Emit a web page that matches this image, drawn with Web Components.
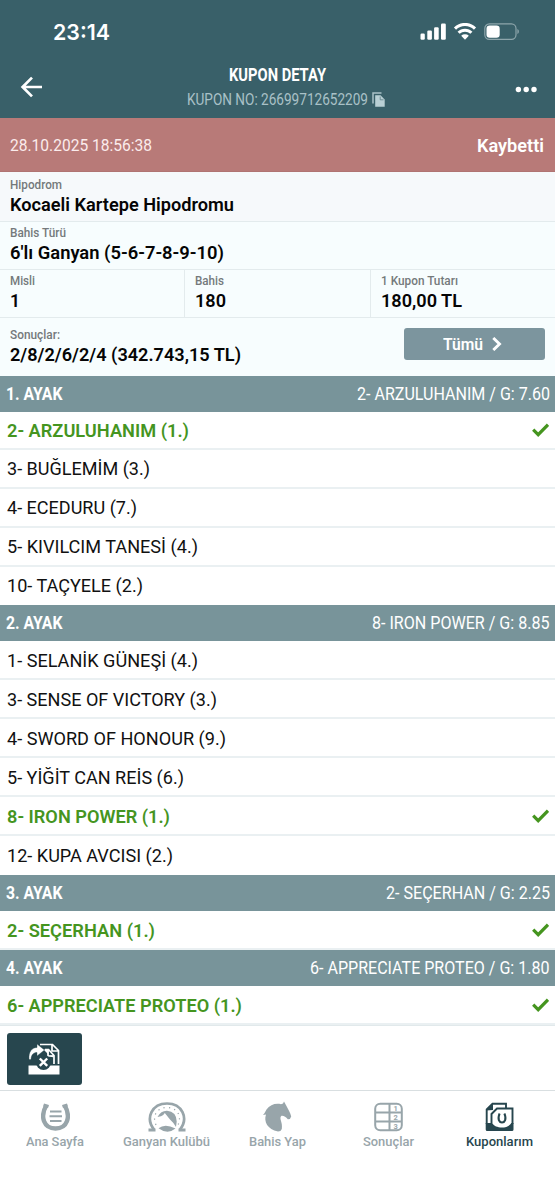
<!DOCTYPE html>
<html lang="tr"><head><meta charset="utf-8"><title>Kupon Detay</title>
<style>html,body{margin:0;background:#fff}</style></head><body>
<coupon-app></coupon-app>
<script>
const define=(name,css,html,after)=>{
  const t=document.createElement('template');
  t.innerHTML=`<style>*{box-sizing:border-box}${css}</style>${html}`;
  customElements.define(name,class extends HTMLElement{
    connectedCallback(){
      if(this.shadowRoot)return;
      this.attachShadow({mode:'open'}).append(t.content.cloneNode(true));
      if(after)after.call(this,this.shadowRoot);
    }
  });
};
// Single-line label whose glyphs are scaled horizontally to the width in "w".
define('fit-text',':host{display:block;white-space:nowrap;flex:none}span{display:inline-block;transform-origin:0 50%}','<span><slot></slot></span>',function(r){
  const w=+this.getAttribute('w'),s=r.querySelector('span');
  const n=s.getBoundingClientRect().width;
  this.style.width=w+'px';
  if(n)s.style.transform=`scaleX(${w/n})`;
});
define('status-bar',`:host{display:flex;height:62px;padding:1px 35px 0 53px;align-items:center;justify-content:space-between;color:#fff}
fit-text{font:600 22px Inter,sans-serif}svg{display:block}`,
`<fit-text w="57"><slot></slot></fit-text>
<svg width="100" height="18" viewBox="0 0 100 18" fill="#fff"><rect x="0.5" y="10.5" width="4.3" height="6.2" rx="1.2"/><rect x="7.3" y="7.5" width="4.6" height="9.2" rx="1.2"/><rect x="14.1" y="4.2" width="4.6" height="12.5" rx="1.2"/><rect x="21" y=".5" width="4.8" height="16.2" rx="1.2"/>
<g fill="none" stroke="#fff" stroke-width="3"><path d="M35 5.6a14 14 0 0 1 20 0"/><path d="M38.6 9.8a9 9 0 0 1 12.8 0"/></g><path d="M41.2 12.7a5.6 5.6 0 0 1 7.6 0L45 16.8z"/>
<rect x="64.8" y=".9" width="31.2" height="15.4" rx="4.6" fill="none" stroke="#8da5ab" stroke-width="1.2"/><rect x="66.5" y="2.5" width="13.2" height="12.2" rx="3.2"/><path d="M97.4 6v5c2-.8 2-4.200 0-5z" fill="#8da5ab"/></svg>`);
define('app-header',`:host{display:block;height:118px;background:#396069;color:#fff;font-family:Roboto,sans-serif}
.bar{display:grid;grid-template-columns:60px 1fr 60px;height:56px}
.back{display:block;margin:14px 0 0 20px}.more{display:block;margin:24px 0 0 20px}
.mid{display:flex;flex-direction:column;align-items:center}
.title{font-size:17.5px;line-height:20px;font-weight:700;margin-top:3px}
.no{display:flex;gap:4px;margin-top:5px;padding-left:16px;font-size:16.5px;line-height:20px;color:#a9c1c7}
.no svg{margin-top:2px}`,
`<status-bar>23:14</status-bar><div class="bar"><svg class="back" width="24" height="22" fill="none" stroke="#fff" stroke-width="2.7"><path d="M22 11H3M12 1.600L2.600 11l9.400 9.400"/></svg>
<div class="mid"><fit-text class="title" w="97">KUPON DETAY</fit-text><div class="no"><fit-text w="181">KUPON NO: 26699712652209</fit-text><svg width="13" height="15"><path d="M1 11.500V1h8.500" fill="none" stroke="#a9c1c7" stroke-width="1.500"/><path d="M3.200 3.200h5.300l4.200 4.200V14.700h-9.500z" fill="#b9d0d5"/><path d="M8.200 4.500v3.300h3.300" fill="none" stroke="#5d7f87" stroke-width=".8"/></svg></div></div>
<svg class="more" width="24" height="8" fill="#fff"><circle cx="3.400" cy="3.500" r="2.700"/><circle cx="11.200" cy="3.500" r="2.700"/><circle cx="19" cy="3.500" r="2.700"/></svg></div>`);
define('status-banner',`:host{display:flex;height:54px;background:#b87a78;color:#fff;align-items:center;justify-content:space-between;padding:1px 11px 0 10.4px;font-family:Roboto,sans-serif;border-bottom:1px solid #b07472}
.d{font-size:16px;color:#fbecec}.s{font-size:18px;font-weight:600}`,
`<fit-text class="d" w="142">28.10.2025 18:56:38</fit-text><fit-text class="s" w="67">Kaybetti</fit-text>`);
define('info-field',`:host{display:block;height:48px;padding:4px 0 0 10px;background:#f7fdfe;border-bottom:1px solid #e3ebed;font-family:Roboto,sans-serif}
.l{font-size:12px;line-height:15px;font-weight:500;color:#74797b}.v{font-size:18px;line-height:22px;font-weight:600;color:#050505;margin-top:1px}`,
`<fit-text class="l"></fit-text><fit-text class="v"></fit-text>`,function(r){
  const put=(c,t,w)=>{const o=r.querySelector(c),e=document.createElement('fit-text');e.className=o.className;e.textContent=t;e.setAttribute('w',w);o.replaceWith(e)};
  put('.l',this.getAttribute('label'),this.getAttribute('lw'));
  put('.v',this.getAttribute('value'),this.getAttribute('vw'));
});
define('coupon-info',`:host{display:block}
.first{height:50px;background:#f6f9fb;padding-top:5.5px}.three{display:grid;grid-template-columns:184px 186px 185px}
.three info-field+info-field{border-left:1px solid #e3ebed}
.res{display:flex;height:58px;background:#f7fdfe;justify-content:space-between}.res info-field{border:0;height:57px;padding-top:9.5px;background:none}
button{width:141px;height:32px;margin:10px 10px 0 0;border:0;border-radius:3px;background:#7c959e;color:#fff;display:flex;align-items:center;justify-content:center;gap:9px;padding:0 4px 0 0;font:600 16px Roboto,sans-serif}`,
`<info-field class="first" label="Hipodrom" lw="52" value="Kocaeli Kartepe Hipodromu" vw="224"></info-field>
<info-field label="Bahis Türü" lw="56" value="6'lı Ganyan (5-6-7-8-9-10)" vw="214"></info-field>
<div class="three"><info-field label="Misli" lw="25" value="1" vw="10"></info-field><info-field label="Bahis" lw="29" value="180" vw="31"></info-field><info-field label="1 Kupon Tutarı" lw="77" value="180,00 TL" vw="81"></info-field></div>
<div class="res"><info-field label="Sonuçlar:" lw="50" value="2/8/2/6/2/4 (342.743,15 TL)" vw="231"></info-field><button><fit-text w="40">Tümü</fit-text><svg width="10" height="14" fill="none" stroke="#fff" stroke-width="2.900"><path d="M1.300 1L7.500 7l-6.200 6"/></svg></button></div>`);
define('leg-header',`:host{display:flex;height:36px;background:#78949a;color:#fff;align-items:center;justify-content:space-between;padding:0 5.5px 1px 5.5px;font-family:Roboto,sans-serif}
.a{font-size:18px;font-weight:700}.b{font-size:18.5px}`,`<div class="a"></div><div class="b"></div>`,function(r){
  for(const [c,t,w] of [['.a',this.getAttribute('leg'),56.500],['.b',this.getAttribute('winner'),this.getAttribute('w')]]){const e=document.createElement('fit-text');e.textContent=t;e.setAttribute('w',w);r.querySelector(c).append(e)}
});
define('horse-row',`:host{display:flex;height:39px;background:#fff;border-bottom:2px solid #eaf0f2;align-items:center;justify-content:space-between;padding:1px 6px 0 6.5px;font:18px Roboto,sans-serif;color:#111}
:host([short]){height:38px;padding-top:0}:host([won]){color:#45951f;font-weight:600}svg{display:none}:host([won]) svg{display:block;margin-right:.5px}:host([last]){border-color:transparent}`,
`<div></div><svg width="17" height="14" fill="none" stroke="#45951f" stroke-width="3.2"><path d="M1.200 6.700l5 5L16 1.700"/></svg>`,function(r){
  const e=document.createElement('fit-text');e.setAttribute('w',this.getAttribute('w'));e.textContent=this.getAttribute('name');r.querySelector('div').append(e);
});
define('race-leg',':host{display:block}:host(:first-of-type) ::slotted(horse-row){padding-top:0}','<slot></slot>');
define('action-bar',`:host{display:block;height:66px;padding:7px 0 0 6.5px;border-bottom:1px solid #d9dfe1;border-top:1px solid #e1e9eb;background:#fff}
button{display:flex;align-items:center;justify-content:center;width:75px;height:52px;border:0;border-radius:3px;background:#27464e;padding:0}`,
`<button aria-label="Paylaş"><svg width="32" height="32" viewBox="0 0 32 32"><g fill="none" stroke="#fff" stroke-width="1.700"><path d="M12 1.500h12.500l6 6V21M24 2v6h6"/><path d="M17 6.500h3.500l5.500 6V21M20 7v6h5.500"/></g><path d="M15.500 6.500l5 0v6h4l1 2-3-1z" fill="#fff"/><path d="M1 16.500C.5 8.500 4 4.500 9 4.500V1l7.500 6L9 13V9.500C5.500 9.500 3.300 11.500 3 16.500z" fill="#fff" stroke="#27464e" stroke-width=".4"/><path d="M.5 22.500h31V31.500H.5z" fill="#fff"/><circle cx="15.500" cy="19.300" r="7.600" fill="#27464e"/><path d="M11.800 15.500l7.400 7.400m0-7.400l-7.400 7.400" stroke="#fff" stroke-width="2.400"/></svg></button>`);
define('tab-item',`:host{display:flex;flex-direction:column;align-items:center;color:#98a5aa;font:500 13px/18px Roboto,sans-serif}
:host([active]){color:#27464e}.i{height:30px;display:flex;align-items:flex-end;margin-bottom:1px}.t{margin-left:-1px}`,`<div class="i"><slot name="icon"></slot></div><div class="t"></div>`,function(r){
  const e=document.createElement('fit-text');e.setAttribute('w',this.getAttribute('w'));e.textContent=this.getAttribute('label');r.querySelector('.t').append(e);
});
define('tab-bar',`:host{display:grid;grid-template-columns:repeat(5,1fr);height:109px;padding-top:11px;background:#fff}svg{display:block}text{font:700 7.500px Roboto,sans-serif}`,
`<tab-item label="Ana Sayfa" w="58"><svg slot="icon" width="29" height="30" viewBox="0 0 29 30"><path d="M5.500 3C-1.500 15 3 26.500 14.500 26.500S30.500 15 23.500 3" fill="none" stroke="currentColor" stroke-width="4.400"/><path d="M3 1.500l5 1.500-1 3-5-1.500zM26 1.500l-5 1.500 1 3 5-1.500z" fill="currentColor"/><path d="M9 9.500h11.500M8.500 14.200h12.500M9 19h11.500" stroke="currentColor" stroke-width="1.900"/></svg></tab-item>
<tab-item label="Ganyan Kulübü" w="87"><svg slot="icon" width="38" height="31" viewBox="0 0 38 31" fill="currentColor"><path d="M6 28.500C-3 17 4 2.500 19 2.500S41 17 32 28.500" fill="none" stroke="currentColor" stroke-width="2.700"/><path d="M.5 27.500h7v3H.5zM30.500 27.500h7v3h-7z"/><path d="M8 24C3.500 14 10 6.500 19 6.500S34.500 14 30 24" fill="none" stroke="currentColor" stroke-width="1.200" stroke-dasharray="1.200 4.200"/><path d="M9.500 16Q13 9.500 19 9.700Q28.500 10.500 28.700 20.500L28 26Q25.500 21.500 22 18.500L16.800 12Q15.500 14.500 13 15.200zM10.500 27.200Q17 22 27.500 27.500Q19.500 34 10.500 27.200z"/></svg></tab-item>
<tab-item label="Bahis Yap" w="57"><svg slot="icon" width="29" height="31" viewBox="0 0 29 31" fill="currentColor"><path d="M21 .5l2.200 4C25 8 27.500 12 28.200 15.500Q27.500 18.500 24.800 18.300Q22 14.500 18.500 14.800C15.500 17.500 20 21 18.800 28Q18 30.500 15 30.500C4.500 28.500 .5 20.500 3 13.500L0 14C2 12 2.500 10 3.500 8.500C7 4 12 2 18 3.200Q20.500 3 21 .5z"/></svg></tab-item>
<tab-item label="Sonuçlar" w="51"><svg slot="icon" width="29" height="30" viewBox="0 0 29 30" fill="currentColor"><rect x="1.200" y="1.700" width="26.600" height="26.600" rx="5" fill="none" stroke="currentColor" stroke-width="2"/><path d="M1 10.500h27M1 19.500h27M15.500 2v26" fill="none" stroke="currentColor" stroke-width="2"/><text x="19.500" y="8.700">1</text><text x="19.500" y="17.700">2</text><text x="19.500" y="26.500">3</text></svg></tab-item>
<tab-item active label="Kuponlarım" w="67"><svg slot="icon" width="29" height="30" viewBox="0 0 29 30" fill="none" stroke="currentColor" stroke-width="1.900"><path d="M1.700 22V7.500L7.500 1.800H21V6M6.500 21V12l5.500-5.500H27.500V22"/><path d="M1 8.500L8 1.500V8z" fill="currentColor" stroke="none"/><path d="M.7 21h6.500c3 6 16 6 19 0h2.300V27.500q0 1.500-1.500 1.500H2.200Q.7 29 .7 27.500z" fill="currentColor" stroke="none"/><path d="M14.600 11.500C9.500 23.500 24.500 23.500 19.400 11.500" stroke-width="2"/></svg></tab-item>`);
const rows=a=>a.map(([n,w,won],i)=>`<horse-row name="${n}" w="${w}" ${won?'won':''} ${a.length==5&&i%4==0?'short':''} ${i==a.length-1&&a.length>1?'last':''}></horse-row>`).join('');
const leg=(n,win,w,a)=>`<race-leg><leg-header leg="${n}. AYAK" winner="${win}" w="${w}"></leg-header>${rows(a)}</race-leg>`;
define('coupon-app',':host{display:block;width:555px;height:1200px;overflow:hidden;background:#fff}',
'<app-header></app-header><status-banner></status-banner><coupon-info></coupon-info>'+
leg(1,'2- ARZULUHANIM / G: 7.60',193,[['2- ARZULUHANIM (1.)',182,1],['3- BUĞLEMİM (3.)',143],['4- ECEDURU (7.)',130],['5- KIVILCIM TANESİ (4.)',191],['10- TAÇYELE (2.)',136]])+
leg(2,'8- IRON POWER / G: 8.85',177.500,[['1- SELANİK GÜNEŞİ (4.)',191],['3- SENSE OF VICTORY (3.)',210],['4- SWORD OF HONOUR (9.)',219],['5- YİĞİT CAN REİS (6.)',177],['8- IRON POWER (1.)',163,1],['12- KUPA AVCISI (2.)',166]])+
leg(3,'2- SEÇERHAN / G: 2.25',164,[['2- SEÇERHAN (1.)',148,1]])+
leg(4,'6- APPRECIATE PROTEO / G: 1.80',239.500,[['6- APPRECIATE PROTEO (1.)',235,1]])+
'<action-bar></action-bar><tab-bar></tab-bar>');
</script></body></html>
